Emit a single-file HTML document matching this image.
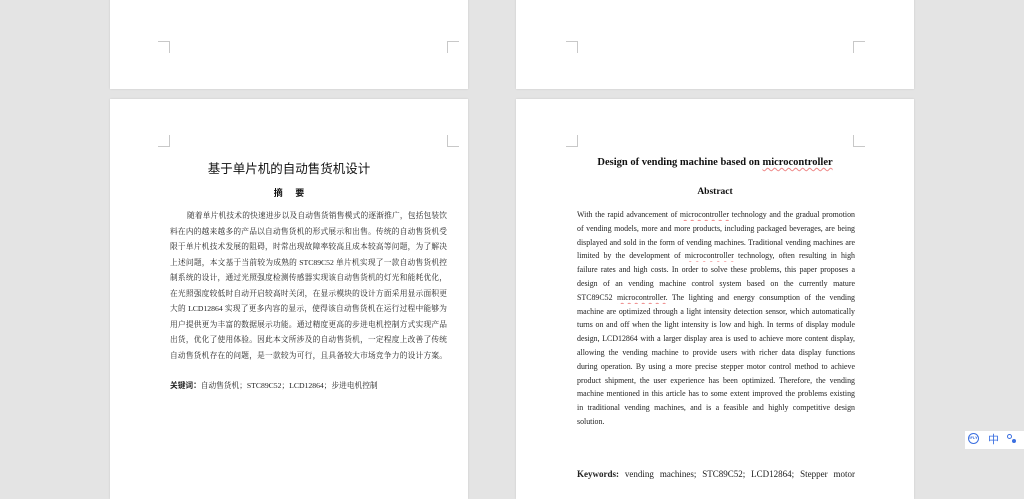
<!DOCTYPE html>
<html><head><meta charset="utf-8"><style>
body{margin:0;width:1024px;height:483px;background:#e4e4e4;position:relative;overflow:hidden;font-family:"Liberation Serif","Noto Serif CJK SC",serif;}
.pg{position:absolute;background:#fff;box-shadow:0 0 2px rgba(0,0,0,.12);}
.c{position:absolute;width:11px;height:11px;border-color:#c8c8c8;border-style:solid;border-width:0;}
.l{position:absolute;white-space:nowrap;overflow:hidden;text-align:justify;text-align-last:justify;color:#222;}
.zh .l{font-family:"Liberation Serif","Noto Serif CJK SC",serif;font-size:7.7px;height:14px;line-height:14px;left:60px;width:277px;}
.en .l{font-size:7.9px;height:12px;line-height:12px;left:61px;width:278px;}
.u{text-decoration:underline wavy #e88;text-decoration-thickness:0.6px;text-underline-offset:1.5px;}
</style></head><body>
<div class="pg" style="left:110px;top:-5px;width:358px;height:94px"></div>
<div class="pg" style="left:516px;top:-5px;width:398px;height:94px"></div>
<div class="c" style="left:158px;top:41px;border-top-width:1px;border-right-width:1px"></div>
<div class="c" style="left:447px;top:41px;border-top-width:1px;border-left-width:1px"></div>
<div class="c" style="left:566px;top:41px;border-top-width:1px;border-right-width:1px"></div>
<div class="c" style="left:853px;top:41px;border-top-width:1px;border-left-width:1px"></div>

<div class="pg zh" style="left:110px;top:99px;width:358px;height:400px">
<div class="c" style="left:48px;top:36px;border-bottom-width:1px;border-right-width:1px"></div>
<div class="c" style="left:337px;top:36px;border-bottom-width:1px;border-left-width:1px"></div>
<div style="position:absolute;left:0;width:358px;top:59px;text-align:center;font-family:'Liberation Sans','Noto Sans CJK SC',sans-serif;font-size:12.5px;color:#111">基于单片机的自动售货机设计</div>
<div style="position:absolute;left:0;width:358px;top:87px;text-align:center;font-family:'Liberation Sans','Noto Sans CJK SC',sans-serif;font-size:9px;font-weight:bold;color:#111">摘&nbsp;&nbsp;&nbsp;&nbsp;&nbsp;要</div>
<div class="l" style="top:110px;left:77px;width:260px">随着单片机技术的快速进步以及自动售货销售模式的逐渐推广，包括包装饮</div>
<div class="l" style="top:125.5px">料在内的越来越多的产品以自动售货机的形式展示和出售。传统的自动售货机受</div>
<div class="l" style="top:141px">限于单片机技术发展的阻碍，时常出现故障率较高且成本较高等问题，为了解决</div>
<div class="l" style="top:156.5px">上述问题，本文基于当前较为成熟的 STC89C52 单片机实现了一款自动售货机控</div>
<div class="l" style="top:172px">制系统的设计，通过光照强度检测传感器实现该自动售货机的灯光和能耗优化，</div>
<div class="l" style="top:187.5px">在光照强度较低时自动开启较高时关闭，在显示模块的设计方面采用显示面积更</div>
<div class="l" style="top:203px">大的 LCD12864 实现了更多内容的显示，使得该自动售货机在运行过程中能够为</div>
<div class="l" style="top:218.5px">用户提供更为丰富的数据展示功能。通过精度更高的步进电机控制方式实现产品</div>
<div class="l" style="top:234px">出货，优化了使用体验。因此本文所涉及的自动售货机，一定程度上改善了传统</div>
<div class="l" style="top:249.5px">自动售货机存在的问题，是一款较为可行，且具备较大市场竞争力的设计方案。</div>
<div class="l" style="top:280px;text-align-last:left;width:240px"><b style="font-family:'Liberation Sans','Noto Sans CJK SC',sans-serif">关键词：</b>自动售货机；STC89C52；LCD12864；步进电机控制</div>
</div>

<div class="pg en" style="left:516px;top:99px;width:398px;height:400px">
<div class="c" style="left:50px;top:36px;border-bottom-width:1px;border-right-width:1px"></div>
<div class="c" style="left:337px;top:36px;border-bottom-width:1px;border-left-width:1px"></div>
<div style="position:absolute;left:0;width:398px;top:58px;text-align:center;font-size:10.5px;font-weight:bold;color:#111">Design of vending machine based on <span class="u">microcontroller</span></div>
<div style="position:absolute;left:0;width:398px;top:88px;text-align:center;font-size:9.5px;font-weight:bold;color:#111">Abstract</div>
<div class="l" style="top:110px">With the rapid advancement of <span class="u">microcontroller</span> technology and the gradual promotion</div>
<div class="l" style="top:123.8px">of vending models, more and more products, including packaged beverages, are being</div>
<div class="l" style="top:137.6px">displayed and sold in the form of vending machines. Traditional vending machines are</div>
<div class="l" style="top:151.4px">limited by the development of <span class="u">microcontroller</span> technology, often resulting in high</div>
<div class="l" style="top:165.2px">failure rates and high costs. In order to solve these problems, this paper proposes a</div>
<div class="l" style="top:179px">design of an vending machine control system based on the currently mature</div>
<div class="l" style="top:192.8px">STC89C52 <span class="u">microcontroller</span>. The lighting and energy consumption of the vending</div>
<div class="l" style="top:206.6px">machine are optimized through a light intensity detection sensor, which automatically</div>
<div class="l" style="top:220.4px">turns on and off when the light intensity is low and high. In terms of display module</div>
<div class="l" style="top:234.2px">design, LCD12864 with a larger display area is used to achieve more content display,</div>
<div class="l" style="top:248px">allowing the vending machine to provide users with richer data display functions</div>
<div class="l" style="top:261.8px">during operation. By using a more precise stepper motor control method to achieve</div>
<div class="l" style="top:275.6px">product shipment, the user experience has been optimized. Therefore, the vending</div>
<div class="l" style="top:289.4px">machine mentioned in this article has to some extent improved the problems existing</div>
<div class="l" style="top:303.2px">in traditional vending machines, and is a feasible and highly competitive design</div>
<div class="l" style="top:317px;text-align-last:left">solution.</div>
<div class="l" style="top:368px;font-size:9px;height:14px;line-height:14px"><b>Keywords:</b> vending machines; STC89C52; LCD12864; Stepper motor</div>
</div>

<div style="position:absolute;left:965px;top:431px;width:59px;height:18px;background:#fff"></div>
<div style="position:absolute;left:968px;top:433px;width:11px;height:11px;border:1.5px solid #3b6fe0;border-radius:50%;box-sizing:border-box;font:bold 4px 'Liberation Sans',sans-serif;color:#3b6fe0;text-align:center;line-height:8px">iFLY</div>
<div style="position:absolute;left:988px;top:431px;font:11px 'Liberation Sans','Noto Sans CJK SC',sans-serif;color:#3b6fe0">中</div>
<div style="position:absolute;left:1007px;top:434px;width:3px;height:3px;border:1px solid #3b6fe0;border-radius:50%"></div>
<div style="position:absolute;left:1012px;top:439px;width:4px;height:4px;background:#3b6fe0;border-radius:50%"></div>
</body></html>
